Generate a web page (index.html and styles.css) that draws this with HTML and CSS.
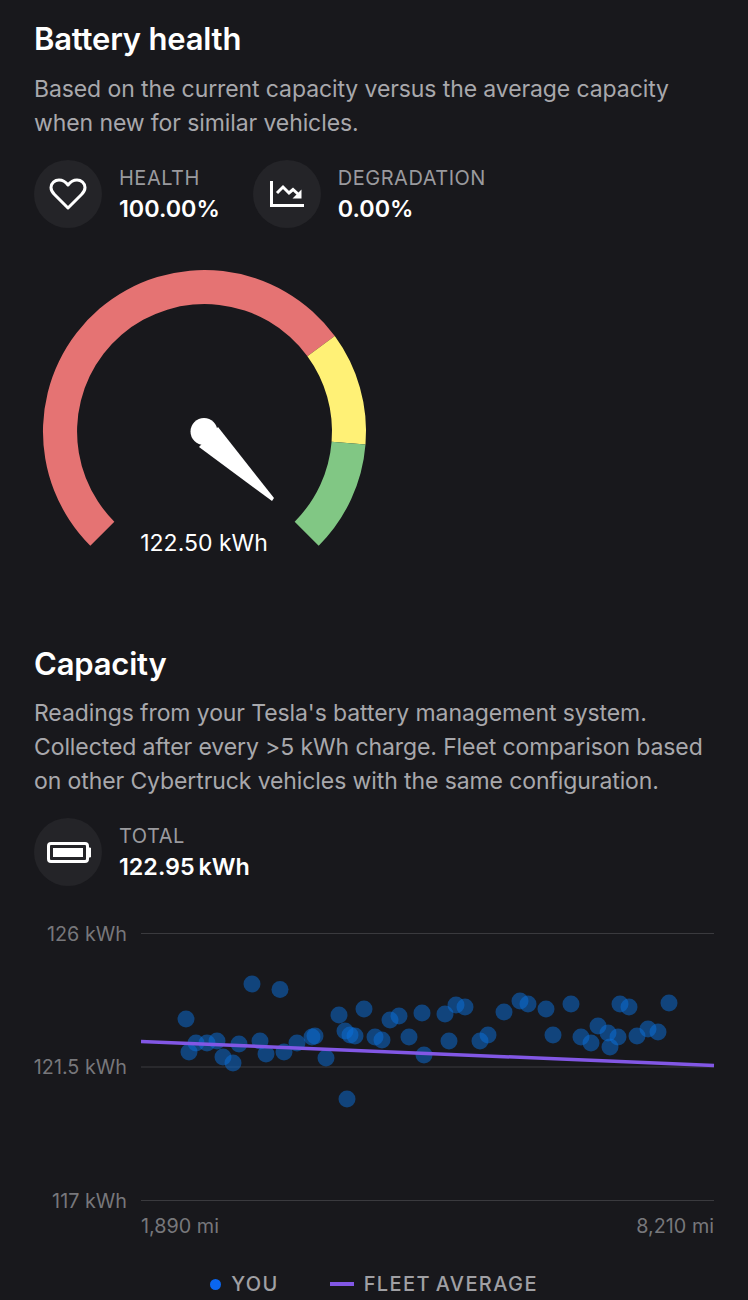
FILE: index.html
```html
<!DOCTYPE html>
<html lang="en">
<head>
<meta charset="utf-8">
<title>Battery health</title>
<link rel="stylesheet" href="styles.css">
</head>
<body>
<main class="page">
  <section class="health">
    <h2 class="title">Battery health</h2>
    <p class="desc">Based on the current capacity versus the average capacity when new for similar vehicles.</p>
    <div class="stats">
      <div class="stat">
        <span class="icon-circle">
          <svg class="icon" width="68" height="68" viewBox="0 0 68 68" fill="none" stroke="#fff" stroke-width="3" stroke-linejoin="round" stroke-linecap="round"><path d="M34 48 L20.5 34.5 C17.5 31.5 17 29.500 17 27.500 C17 23 20.800 20 25 20 C29 20 31.800 22 34 25 C36.200 22 39 20 43 20 C47.200 20 51 23 51 27.500 C51 29.500 50.500 31.500 47.500 34.500 Z"/></svg>
        </span>
        <div class="stat-text"><span class="stat-label">HEALTH</span><span class="stat-value">100.00%</span></div>
      </div>
      <div class="stat">
        <span class="icon-circle">
          <svg class="icon" width="68" height="68" viewBox="0 0 68 68" fill="none" stroke="#fff" stroke-width="3"><path d="M18.500 21 V45.500 H51"/><path d="M24 33 L30 27 L36 33 L40 29.500 L45 34" stroke-width="3"/><path d="M48.500 29.500 V38.500 H39.500 Z" fill="#fff" stroke="none"/></svg>
        </span>
        <div class="stat-text"><span class="stat-label">DEGRADATION</span><span class="stat-value">0.00%</span></div>
      </div>
    </div>
    <div class="gauge">
      <svg width="340" height="300" viewBox="34 260 340 300" fill="none">
        <path d="M90.300 545.700 A161.500 161.500 0 1 1 334.800 336.100 L307.400 356.200 A127.500 127.500 0 1 0 114.340 521.660 Z" fill="#e57373"/>
        <path d="M334.800 336.100 A161.500 161.500 0 0 1 365.500 444.450 L331.600 441.700 A127.500 127.500 0 0 0 307.400 356.200 Z" fill="#fff176"/>
        <path d="M365.500 444.450 A161.500 161.500 0 0 1 318.700 545.700 L294.660 521.660 A127.500 127.500 0 0 0 331.600 441.700 Z" fill="#81c784"/>
        <circle cx="204" cy="431.500" r="13.500" fill="#fff"/>
        <path d="M218 427 L274 498 L272 501 L199 447 Z" fill="#fff"/>
        <text class="gauge-text" x="204" y="551" text-anchor="middle">122.50 kWh</text>
      </svg>
    </div>
  </section>

  <section class="capacity">
    <h2 class="title">Capacity</h2>
    <p class="desc">Readings from your Tesla's battery management system. Collected after every &gt;5 kWh charge. Fleet comparison based on other Cybertruck vehicles with the same configuration.</p>
    <div class="stats">
      <div class="stat">
        <span class="icon-circle">
          <svg class="icon" width="68" height="68" viewBox="0 0 68 68" fill="none"><rect x="14.500" y="25.500" width="39" height="18" rx="2.500" stroke="#fff" stroke-width="3"/><rect x="19" y="30" width="30" height="9" fill="#fff"/><path d="M55 30 H56.500 V39 H55 Z" fill="#fff" stroke="#fff" stroke-width="1"/></svg>
        </span>
        <div class="stat-text"><span class="stat-label">TOTAL</span><span class="stat-value">122.95 kWh</span></div>
      </div>
    </div>
    <svg class="chart" width="748" height="320" viewBox="0 920 748 320" fill="none">
      <g class="grid" stroke="#3a3a3e" stroke-width="1">
        <line x1="141" y1="933.500" x2="714" y2="933.500"/>
        <line x1="141" y1="1067" x2="714" y2="1067"/>
        <line x1="141" y1="1200.500" x2="714" y2="1200.500"/>
      </g>
      <g class="axis">
        <text x="127" y="940.500" text-anchor="end">126 kWh</text>
        <text x="127" y="1074" text-anchor="end">121.5 kWh</text>
        <text x="127" y="1207.500" text-anchor="end">117 kWh</text>
        <text x="141" y="1232.500">1,890 mi</text>
        <text x="714" y="1232.500" text-anchor="end">8,210 mi</text>
      </g>
      <g class="dots">
        <circle cx="252" cy="984" r="8.500"/><circle cx="280" cy="989.500" r="8.500"/><circle cx="186" cy="1019" r="8.500"/><circle cx="189" cy="1052" r="8.500"/><circle cx="196" cy="1043" r="8.500"/><circle cx="207" cy="1043" r="8.500"/><circle cx="217" cy="1041" r="8.500"/><circle cx="223" cy="1057" r="8.500"/><circle cx="233" cy="1063" r="8.500"/><circle cx="239" cy="1044" r="8.500"/><circle cx="260" cy="1041" r="8.500"/><circle cx="266" cy="1054" r="8.500"/><circle cx="284" cy="1052" r="8.500"/><circle cx="297" cy="1043" r="8.500"/><circle cx="312" cy="1037" r="8.500"/><circle cx="315" cy="1036" r="8.500"/><circle cx="326" cy="1058" r="8.500"/><circle cx="339" cy="1015" r="8.500"/><circle cx="345" cy="1031" r="8.500"/><circle cx="350" cy="1035" r="8.500"/><circle cx="355" cy="1036" r="8.500"/><circle cx="347" cy="1099" r="8.500"/><circle cx="364" cy="1009" r="8.500"/><circle cx="375" cy="1037" r="8.500"/><circle cx="382" cy="1040" r="8.500"/><circle cx="390" cy="1020" r="8.500"/><circle cx="399" cy="1016" r="8.500"/><circle cx="409" cy="1037" r="8.500"/><circle cx="422" cy="1013" r="8.500"/><circle cx="424" cy="1055" r="8.500"/>
        <circle cx="445" cy="1014" r="8.500"/><circle cx="456" cy="1005" r="8.500"/><circle cx="465" cy="1007" r="8.500"/><circle cx="449" cy="1041" r="8.500"/><circle cx="480" cy="1041" r="8.500"/><circle cx="488" cy="1035" r="8.500"/><circle cx="504" cy="1012" r="8.500"/><circle cx="520" cy="1001" r="8.500"/><circle cx="528" cy="1004" r="8.500"/><circle cx="546" cy="1009" r="8.500"/><circle cx="571" cy="1004" r="8.500"/><circle cx="553" cy="1035" r="8.500"/><circle cx="581" cy="1037" r="8.500"/><circle cx="591" cy="1043" r="8.500"/><circle cx="598" cy="1026" r="8.500"/><circle cx="608" cy="1033" r="8.500"/><circle cx="618" cy="1037" r="8.500"/><circle cx="610" cy="1047" r="8.500"/><circle cx="620" cy="1004" r="8.500"/><circle cx="629" cy="1007" r="8.500"/><circle cx="637" cy="1036" r="8.500"/><circle cx="648" cy="1029" r="8.500"/><circle cx="658" cy="1032" r="8.500"/><circle cx="669" cy="1003" r="8.500"/>
      </g>
      <line x1="141" y1="1041.500" x2="714" y2="1065.500" stroke="#8257e5" stroke-width="3.500"/>
    </svg>
    <div class="legend">
      <span class="legend-item"><span class="legend-dot"></span>YOU</span>
      <span class="legend-item"><span class="legend-line"></span>FLEET AVERAGE</span>
    </div>
  </section>
</main>
</body>
</html>
```
FILE: styles.css
```css
* { box-sizing: border-box; }
html, body { margin: 0; padding: 0; }
body {
  background: #18181c;
  color: #fff;
  font-family: Inter, "Liberation Sans", sans-serif;
  width: 748px;
  height: 1300px;
  overflow: hidden;
}
.page { display: flex; flex-direction: column; }
.health { padding: 20px 34px 0; height: 640px; }
.capacity { padding: 5px 0 0; }
.capacity .title, .capacity .desc, .capacity .stats { margin-left: 34px; margin-right: 34px; }
.title { margin: 0; font-size: 31px; line-height: 38px; font-weight: 600; letter-spacing: -0.2px; }
.desc { margin: 14px 0 0; font-size: 23px; line-height: 34px; font-weight: 400; color: #a8a8ac; letter-spacing: -0.1px; }
.capacity .desc { margin-top: 13px; }
.stats { display: flex; gap: 33px; margin-top: 20px; }
.stat { display: flex; align-items: center; gap: 17px; }
.icon-circle { width: 68px; height: 68px; border-radius: 50%; background: #242428; display: block; flex: none; }
.icon { display: block; }
.stat-text { display: flex; flex-direction: column; padding-top: 2px; }
.stat-label { font-size: 20px; line-height: 28px; color: #9a9a9e; letter-spacing: 0.5px; }
.stat-value { font-size: 23.300px; line-height: 34px; font-weight: 600; color: #fff; word-spacing: -2px; }
.gauge { margin: 32px 0 0; }
.gauge svg { display: block; }
.gauge-text { font-family: Inter, "Liberation Sans", sans-serif; font-size: 23px; fill: #fff; }
.chart { display: block; margin-top: 34px; }
.axis text { font-family: Inter, "Liberation Sans", sans-serif; font-size: 19.800px; fill: #77777b; }
.dots circle { fill: #0a70dc; fill-opacity: 0.5; }
.legend { display: flex; justify-content: center; gap: 51px; margin-top: 30px; font-size: 20px; line-height: 28px; font-weight: 500; color: #a0a0a4; letter-spacing: 1.400px; word-spacing: -2px; }
.legend-item { display: flex; align-items: center; gap: 10px; }
.legend-dot { width: 11px; height: 11px; border-radius: 50%; background: #0a66f0; }
.legend-line { width: 24px; height: 4px; background: #8257e5; }
```
